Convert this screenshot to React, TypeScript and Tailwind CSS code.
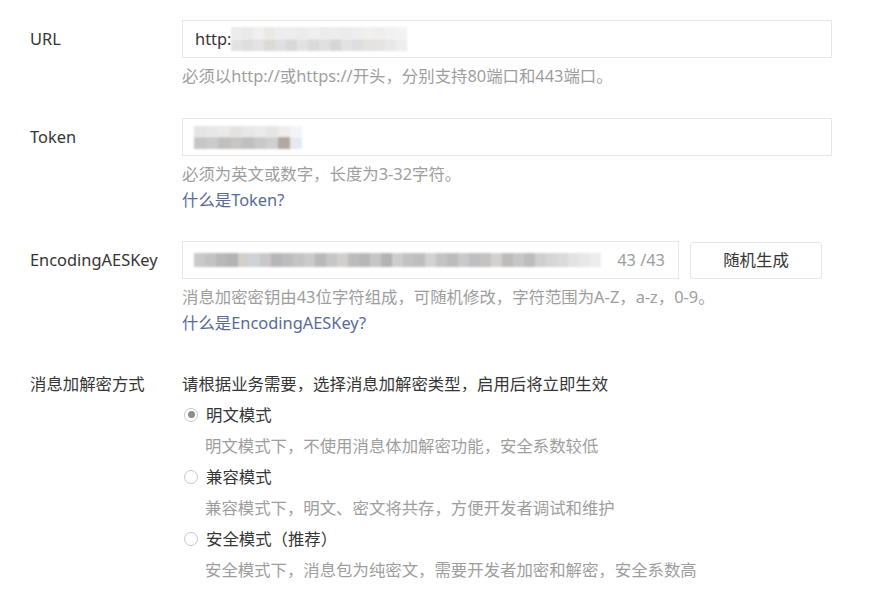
import React from 'react';

const font = "font-['Noto_Sans','Noto_Sans_CJK_SC',sans-serif]";

function Mosaic({ shades, cell, h }: { shades: string[]; cell: string; h: string }) {
    return (
        <div className={`flex blur-[1px] ${h}`}>
            {shades.map((s, i) => (
                <span key={i} className={`${cell} h-full ${s}`} />
            ))}
        </div>
    );
}

function Radio({ checked, label, desc }: { checked?: boolean; label: string; desc: string }) {
    return (
        <div className="flex flex-col">
            <div className="flex h-[31px] items-center gap-[8px] pl-[2px]">
                <span className="flex h-[14px] w-[14px] items-center justify-center rounded-full border border-[#c8c8c8] bg-white">
                    {checked && <span className="h-[7px] w-[7px] rounded-full bg-[#8d8d8d]" />}
                </span>
                <span className="text-[#353535]">{label}</span>
            </div>
            <div className="flex h-[31px] items-center pl-[23px] text-[#9e9e9e]">{desc}</div>
        </div>
    );
}

export default function App() {
    const urlTop = ['bg-[#ececec]', 'bg-[#e9e9e9]', 'bg-[#f0f0f0]', 'bg-[#ebe9e6]', 'bg-[#ededed]', 'bg-[#eeeeee]', 'bg-[#ebebeb]', 'bg-[#efefef]', 'bg-[#ececec]', 'bg-[#ededed]', 'bg-[#ebebeb]', 'bg-[#eeeeee]', 'bg-[#f0f0f0]', 'bg-[#eeeeee]', 'bg-[#f1f1f1]', 'bg-[#f3f3f3]'];
    const urlBot = ['bg-[#e2e2e2]', 'bg-[#dedede]', 'bg-[#e3e3e3]', 'bg-[#dcdad6]', 'bg-[#dedfe0]', 'bg-[#d8d8d8]', 'bg-[#e2e2e2]', 'bg-[#dadada]', 'bg-[#e0e0e0]', 'bg-[#d6d6d6]', 'bg-[#e2e2e2]', 'bg-[#dedede]', 'bg-[#e5e2e0]', 'bg-[#e4e4e4]', 'bg-[#e8e8e8]', 'bg-[#eceeef]'];
    const tokTop = ['bg-[#e4e4e4]', 'bg-[#e7e7e7]', 'bg-[#eaeaea]', 'bg-[#e2e2e2]', 'bg-[#e8e8e8]', 'bg-[#ebebeb]', 'bg-[#e5e5e5]', 'bg-[#eeeeee]', 'bg-[#f3f4f6]'];
    const tokBot = ['bg-[#c6c6c6]', 'bg-[#cbcbcb]', 'bg-[#c0c0c0]', 'bg-[#c7c4c2]', 'bg-[#bfbfbf]', 'bg-[#c8c8c8]', 'bg-[#cfcfcf]', 'bg-[#b3a79f]', 'bg-[#e6eaf0]'];
    const aes = ['bg-[#c9c9c9]', 'bg-[#c2c2c2]', 'bg-[#b8b8b8]', 'bg-[#b3b3b3]', 'bg-[#d3d0cc]', 'bg-[#cfd3d6]', 'bg-[#c8c8c8]', 'bg-[#b6b6b9]', 'bg-[#bdbdbd]', 'bg-[#c4c4c4]', 'bg-[#cacaca]', 'bg-[#b9b9b9]', 'bg-[#c6c6c6]', 'bg-[#d0cfcd]', 'bg-[#bcbcbc]', 'bg-[#b7b7b7]', 'bg-[#c5c5c5]', 'bg-[#b4b4b4]', 'bg-[#cdcdcd]', 'bg-[#c2c2c2]', 'bg-[#bebebe]', 'bg-[#d2d2d2]', 'bg-[#c4c4c4]', 'bg-[#bcbcbc]', 'bg-[#c9c9c9]', 'bg-[#bfbfc2]', 'bg-[#c3c3c3]', 'bg-[#d4d1cd]', 'bg-[#bcbcbc]', 'bg-[#c6c6c6]', 'bg-[#bdbdbd]', 'bg-[#cfcfcf]', 'bg-[#d6d6d6]', 'bg-[#dadada]', 'bg-[#e2e2e2]', 'bg-[#e8e8e8]', 'bg-[#ededed]'];

    return (
        <div className={`min-h-[605px] w-[887px] bg-white pl-[30px] pt-[20px] text-[16.4px] leading-[26px] ${font}`}>
            {/* URL */}
            <div className="flex">
                <div className="flex h-[38px] w-[152px] shrink-0 items-center text-[#353535]">URL</div>
                <div className="flex w-[650px] flex-col">
                    <div className="flex h-[38px] items-center border border-[#e7e7eb] pl-[12px] text-[#353535]">
                        <span>http:</span>
                        <div className="flex w-[178px] flex-col">
                            <Mosaic shades={urlTop} cell="w-[11px]" h="h-[12px]" />
                            <Mosaic shades={urlBot} cell="w-[11px]" h="h-[12px]" />
                        </div>
                    </div>
                    <div className="mt-[5px] text-[#9e9e9e]">必须以http://或https://开头，分别支持80端口和443端口。</div>
                </div>
            </div>

            {/* Token */}
            <div className="mt-[29px] flex">
                <div className="flex h-[38px] w-[152px] shrink-0 items-center text-[#353535]">Token</div>
                <div className="flex w-[650px] flex-col">
                    <div className="flex h-[38px] items-center border border-[#e7e7eb] pl-[11px]">
                        <div className="flex w-[108px] flex-col">
                            <Mosaic shades={tokTop} cell="w-[12px]" h="h-[11px]" />
                            <Mosaic shades={tokBot} cell="w-[12px]" h="h-[12px]" />
                        </div>
                    </div>
                    <div className="mt-[5px] text-[#9e9e9e]">必须为英文或数字，长度为3-32字符。</div>
                    <a className="text-[#576b95]">什么是Token?</a>
                </div>
            </div>

            {/* EncodingAESKey */}
            <div className="mt-[28px] flex">
                <div className="flex h-[38px] w-[152px] shrink-0 items-center text-[#353535]">EncodingAESKey</div>
                <div className="flex flex-col">
                    <div className="flex items-center gap-[11px]">
                        <div className="flex h-[38px] w-[497px] items-center border border-[#e7e7eb] pl-[11px] pr-[13px]">
                            <div className="flex-1">
                                <Mosaic shades={aes} cell="w-[11px]" h="h-[14px]" />
                            </div>
                            <span className="ml-[12px] text-[#9e9e9e]">43 /43</span>
                        </div>
                        <button className="flex h-[37px] w-[132px] items-center justify-center rounded-[3px] border border-[#e4e8eb] bg-white text-[#353535]">
                            随机生成
                        </button>
                    </div>
                    <div className="mt-[5px] text-[#9e9e9e]">消息加密密钥由43位字符组成，可随机修改，字符范围为A-Z，a-z，0-9。</div>
                    <a className="text-[#576b95]">什么是EncodingAESKey?</a>
                </div>
            </div>

            {/* 消息加解密方式 */}
            <div className="mt-[32px] flex">
                <div className="flex h-[31px] w-[152px] shrink-0 items-center text-[#353535]">消息加解密方式</div>
                <div className="flex flex-col">
                    <div className="flex h-[31px] items-center text-[#353535]">请根据业务需要，选择消息加解密类型，启用后将立即生效</div>
                    <Radio checked label="明文模式" desc="明文模式下，不使用消息体加解密功能，安全系数较低" />
                    <Radio label="兼容模式" desc="兼容模式下，明文、密文将共存，方便开发者调试和维护" />
                    <Radio label="安全模式（推荐）" desc="安全模式下，消息包为纯密文，需要开发者加密和解密，安全系数高" />
                </div>
            </div>
        </div>
    );
}
